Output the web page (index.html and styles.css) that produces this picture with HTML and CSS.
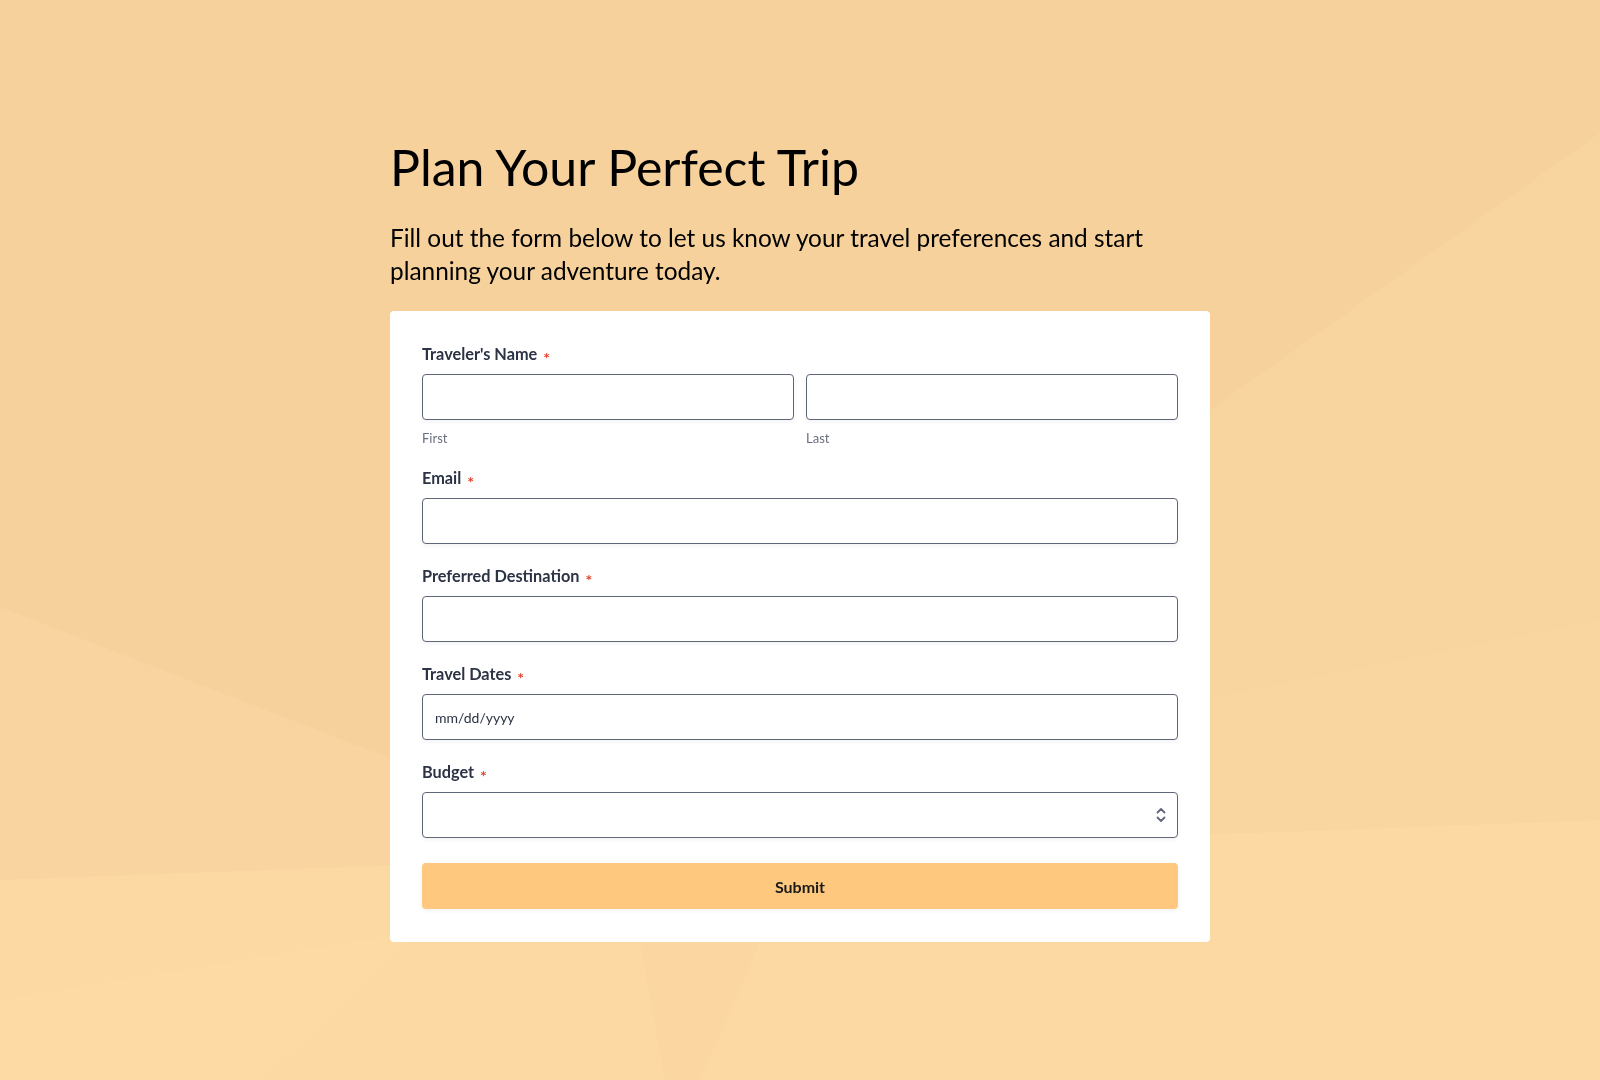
FILE: index.html
```html
<!DOCTYPE html>
<html lang="en">
<head>
    <meta charset="UTF-8">
    <meta name="viewport" content="width=device-width, initial-scale=1.0">
    <title>Plan Your Perfect Trip</title>
    <link rel="stylesheet" href="styles.css">
</head>
<body>

    <!-- Low-poly background -->
    <svg class="page-bg" viewBox="0 0 1600 1080" preserveAspectRatio="none" aria-hidden="true">
        <rect width="1600" height="1080" fill="#f6d19c"/>
        <polygon points="0,607 1220,1080 0,1080" fill="#f9d4a0"/>
        <polygon points="1210,410 1600,133 1600,1080 980,1080" fill="#f8d49f"/>
        <polygon points="1200,700 1600,620 1600,1080 1100,1080" fill="#f9d5a0"/>
        <polygon points="0,880 1600,820 1600,1080 0,1080" fill="#fcd8a2"/>
        <polygon points="640,942 760,942 700,1080 665,1080" fill="#fbd6a0"/>
        <polygon points="0,1000 420,930 260,1080 0,1080" fill="#fdd9a3"/>
    </svg>

    <main class="trip-page">
        <h1 class="trip-title">Plan Your Perfect Trip</h1>
        <p class="trip-intro">Fill out the form below to let us know your travel preferences and start planning your adventure today.</p>

        <form class="trip-form">
            <div class="form-field">
                <label class="form-label">Traveler's Name <span class="required">*</span></label>
                <div class="name-row">
                    <div>
                        <input class="form-input" type="text">
                        <span class="sub-label">First</span>
                    </div>
                    <div>
                        <input class="form-input" type="text">
                        <span class="sub-label">Last</span>
                    </div>
                </div>
            </div>

            <div class="form-field">
                <label class="form-label">Email <span class="required">*</span></label>
                <input class="form-input" type="email">
            </div>

            <div class="form-field">
                <label class="form-label">Preferred Destination <span class="required">*</span></label>
                <input class="form-input" type="text">
            </div>

            <div class="form-field">
                <label class="form-label">Travel Dates <span class="required">*</span></label>
                <input class="form-input date-input" type="text" placeholder="mm/dd/yyyy">
            </div>

            <div class="form-field">
                <label class="form-label">Budget <span class="required">*</span></label>
                <div class="select-wrap">
                    <select class="form-input form-select">
                        <option></option>
                    </select>
                    <svg class="select-arrows" width="10" height="16" viewBox="0 0 10 16" aria-hidden="true">
                        <path d="M1.5 5.5 L5 2 L8.5 5.5" fill="none" stroke="#5f6677" stroke-width="1.8" stroke-linecap="round" stroke-linejoin="round"/>
                        <path d="M1.5 10.5 L5 14 L8.5 10.5" fill="none" stroke="#5f6677" stroke-width="1.8" stroke-linecap="round" stroke-linejoin="round"/>
                    </svg>
                </div>
            </div>

            <button class="submit-btn" type="button">Submit</button>
        </form>
    </main>

</body>
</html>
```

FILE: styles.css
```css
/* Page */
body {
    margin: 0;
    font-family: Lato, "Open Sans", sans-serif;
    color: #000;
    min-height: 1080px;
}

.page-bg {
    position: fixed;
    top: 0;
    left: 0;
    width: 100%;
    height: 100%;
    z-index: -1;
}

.trip-page {
    width: 820px;
    margin: 0 auto;
    padding-top: 137px;
}

/* Heading */
.trip-title {
    font-size: 50px;
    font-weight: 400;
    line-height: 60px;
    margin: 0 0 25px;
    color: #000;
}

.trip-intro {
    font-size: 24.4px;
    line-height: 32.5px;
    margin: 0 0 24px;
    color: #000;
}

/* Form Card */
.trip-form {
    background-color: #fff;
    border-radius: 4px;
    padding: 32px 32px 33px;
}

.form-field {
    margin-bottom: 21px;
}

.form-label {
    display: block;
    font-size: 16.3px;
    font-weight: 700;
    line-height: 21px;
    color: #2c3345;
    margin-bottom: 10px;
}

.required {
    color: #e2442f;
    font-size: 16px;
    line-height: 0;
    margin-left: 2px;
    vertical-align: -4px;
}

.name-row {
    display: grid;
    grid-template-columns: 1fr 1fr;
    gap: 12px;
}

.form-input {
    display: block;
    box-sizing: border-box;
    width: 100%;
    height: 46px;
    border: 1px solid #5f6677;
    border-radius: 4px;
    background-color: #fff;
    box-shadow: 0 2px 4px rgba(0, 0, 0, 0.05);
    font-family: Lato, sans-serif;
    font-size: 14px;
    color: #2c3345;
    padding: 0 12px;
    outline: none;
}

.date-input::placeholder {
    color: #2c3345;
    opacity: 1;
}

.sub-label {
    display: block;
    font-size: 13px;
    line-height: 16px;
    color: #6b7080;
    margin-top: 10px;
}

/* Select */
.select-wrap {
    position: relative;
}

.form-select {
    appearance: none;
    -webkit-appearance: none;
}

.select-arrows {
    position: absolute;
    right: 12px;
    top: 15px;
}

/* Submit */
.submit-btn {
    display: block;
    width: 100%;
    height: 46px;
    margin-top: 25px;
    border: none;
    border-radius: 4px;
    background-color: #fec87e;
    box-shadow: 0 2px 4px rgba(0, 0, 0, 0.05);
    font-family: Lato, sans-serif;
    font-size: 16px;
    font-weight: 700;
    color: #1a1a1a;
    cursor: pointer;
}
```
